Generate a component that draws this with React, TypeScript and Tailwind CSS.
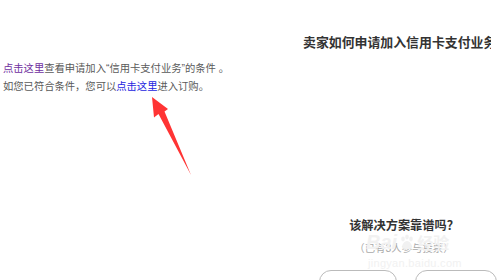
const FONT = "font-['Liberation_Sans','Noto_Sans_CJK_SC',sans-serif]";

function Arrow() {
  return (
    <svg
      className="absolute left-0 top-0 pointer-events-none"
      width="500"
      height="280"
      viewBox="0 0 500 280"
    >
      <polygon
        points="152,97 168,109 164.5,111.5 191,175 158.5,114 154,117.5"
        fill="#ff3434"
      />
    </svg>
  );
}

// faint baidu jingyan watermark over the vote block
function Watermark() {
  return (
    <div className="absolute left-[366px] top-[232px] pointer-events-none text-[#f1f1f1] leading-none">
      <div className="flex items-end gap-[2px]">
        <span className="text-[20px] font-bold italic font-['Liberation_Sans',sans-serif]">Bai</span>
        <svg width="16" height="16" viewBox="0 0 16 16" className="mb-[2px]">
          <g fill="#f1f1f1">
            <ellipse cx="4" cy="5" rx="1.8" ry="2.4" />
            <ellipse cx="8" cy="3" rx="1.8" ry="2.4" />
            <ellipse cx="12" cy="5" rx="1.8" ry="2.4" />
            <path d="M8 7c-3 0-5 4-5 6s2 2 5 2 5 0 5-2-2-6-5-6z" />
          </g>
        </svg>
        <span className="text-[16px] font-bold">经验</span>
      </div>
      <div className="mt-[6px] ml-[2px] text-[11px] font-['Liberation_Sans',sans-serif] tracking-[0.3px]">
        jingyan.baidu.com
      </div>
    </div>
  );
}

export default function App() {
  return (
    <div className={`relative w-[500px] h-[280px] overflow-hidden bg-white ${FONT}`}>
      <div className="flex h-full">
        <div className="w-[300px] shrink-0 pl-[3px] pt-[60px] text-[10.3px] leading-[18px] text-[#5a5a5a]">
          <p className="whitespace-nowrap">
            <a className="text-[#7030a0]">点击这里</a>查看申请加入“信用卡支付业务”的条件 。
          </p>
          <p className="whitespace-nowrap">
            如您已符合条件，您可以<a className="text-[#2424e0]">点击这里</a>进入订购。
          </p>
        </div>
        <div className="w-[200px] shrink-0 flex flex-col">
          <h2 className="shrink-0 w-[191px] overflow-hidden pl-[3px] pt-[34px] text-[12.9px] leading-[18px] font-bold text-[#333] whitespace-nowrap">
            卖家如何申请加入信用卡支付业务
          </h2>
          <div className="shrink-0 mt-[164px] text-center pl-[8px]">
            <p className="text-[12.2px] leading-[20px] font-bold text-[#333]">该解决方案靠谱吗？</p>
            <p className="mt-[5px] text-[10.4px] leading-[16px] text-[#aaa]">（已有3人参与投票）</p>
          </div>
          <div className="shrink-0 mt-[13px] flex gap-[18px] pl-[19px]">
            <button className="w-[78px] h-[28px] shrink-0 rounded-[12px] border border-[#bbb] bg-white" />
            <button className="w-[82px] h-[28px] shrink-0 rounded-[12px] border border-[#bbb] bg-white" />
          </div>
        </div>
      </div>
      <Watermark />
      <Arrow />
    </div>
  );
}
